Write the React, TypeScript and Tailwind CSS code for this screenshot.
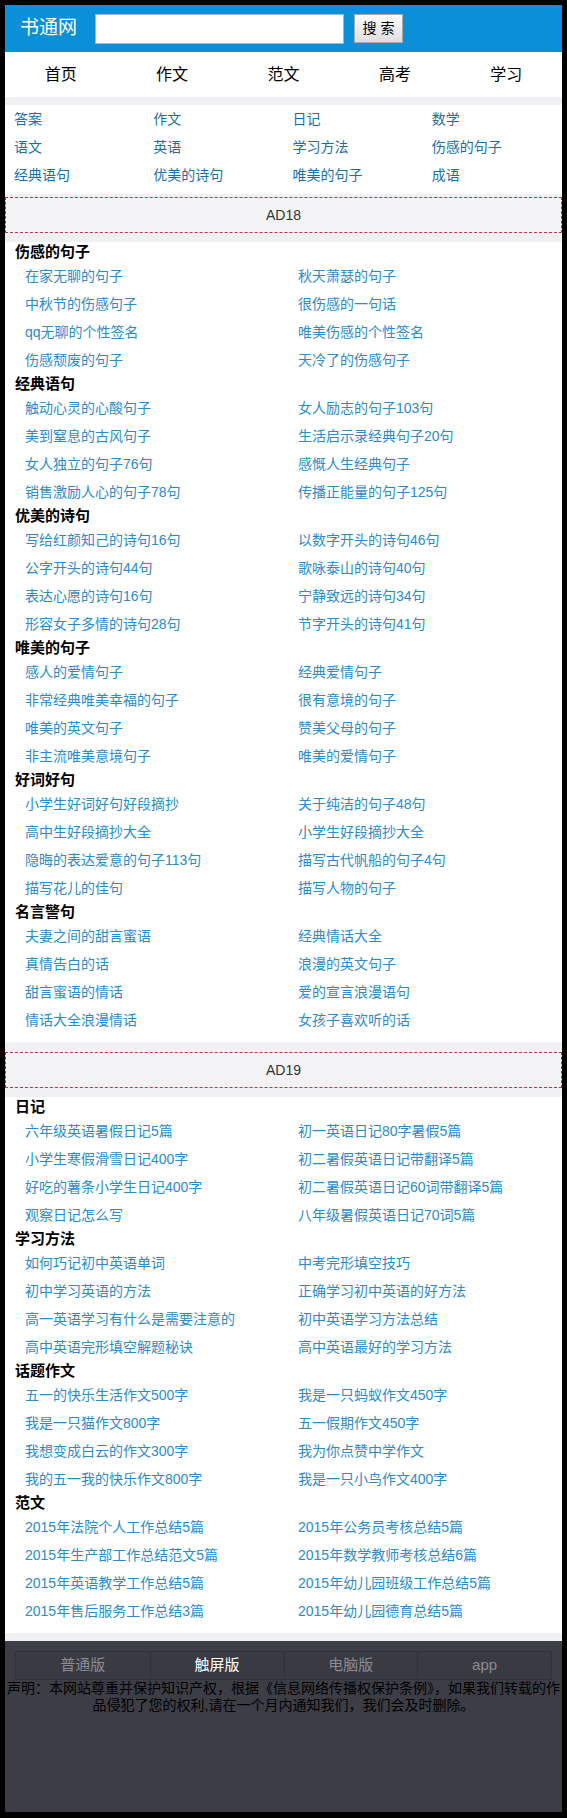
import React from "react";

const FONT = { fontFamily: '"Liberation Sans", "Noto Sans CJK SC", sans-serif' };

const NAV = ["首页", "作文", "范文", "高考", "学习"];

const CATS = [
  "答案", "作文", "日记", "数学",
  "语文", "英语", "学习方法", "伤感的句子",
  "经典语句", "优美的诗句", "唯美的句子", "成语",
];

type Section = { title: string; items: string[] };

const BLOCK_A: Section[] = [
  {
    title: "伤感的句子",
    items: ["在家无聊的句子", "秋天萧瑟的句子", "中秋节的伤感句子", "很伤感的一句话", "qq无聊的个性签名", "唯美伤感的个性签名", "伤感颓废的句子", "天冷了的伤感句子"],
  },
  {
    title: "经典语句",
    items: ["触动心灵的心酸句子", "女人励志的句子103句", "美到窒息的古风句子", "生活启示录经典句子20句", "女人独立的句子76句", "感慨人生经典句子", "销售激励人心的句子78句", "传播正能量的句子125句"],
  },
  {
    title: "优美的诗句",
    items: ["写给红颜知己的诗句16句", "以数字开头的诗句46句", "公字开头的诗句44句", "歌咏泰山的诗句40句", "表达心愿的诗句16句", "宁静致远的诗句34句", "形容女子多情的诗句28句", "节字开头的诗句41句"],
  },
  {
    title: "唯美的句子",
    items: ["感人的爱情句子", "经典爱情句子", "非常经典唯美幸福的句子", "很有意境的句子", "唯美的英文句子", "赞美父母的句子", "非主流唯美意境句子", "唯美的爱情句子"],
  },
  {
    title: "好词好句",
    items: ["小学生好词好句好段摘抄", "关于纯洁的句子48句", "高中生好段摘抄大全", "小学生好段摘抄大全", "隐晦的表达爱意的句子113句", "描写古代帆船的句子4句", "描写花儿的佳句", "描写人物的句子"],
  },
  {
    title: "名言警句",
    items: ["夫妻之间的甜言蜜语", "经典情话大全", "真情告白的话", "浪漫的英文句子", "甜言蜜语的情话", "爱的宣言浪漫语句", "情话大全浪漫情话", "女孩子喜欢听的话"],
  },
];

const BLOCK_B: Section[] = [
  {
    title: "日记",
    items: ["六年级英语暑假日记5篇", "初一英语日记80字暑假5篇", "小学生寒假滑雪日记400字", "初二暑假英语日记带翻译5篇", "好吃的薯条小学生日记400字", "初二暑假英语日记60词带翻译5篇", "观察日记怎么写", "八年级暑假英语日记70词5篇"],
  },
  {
    title: "学习方法",
    items: ["如何巧记初中英语单词", "中考完形填空技巧", "初中学习英语的方法", "正确学习初中英语的好方法", "高一英语学习有什么是需要注意的", "初中英语学习方法总结", "高中英语完形填空解题秘诀", "高中英语最好的学习方法"],
  },
  {
    title: "话题作文",
    items: ["五一的快乐生活作文500字", "我是一只蚂蚁作文450字", "我是一只猫作文800字", "五一假期作文450字", "我想变成白云的作文300字", "我为你点赞中学作文", "我的五一我的快乐作文800字", "我是一只小鸟作文400字"],
  },
  {
    title: "范文",
    items: ["2015年法院个人工作总结5篇", "2015年公务员考核总结5篇", "2015年生产部工作总结范文5篇", "2015年数学教师考核总结6篇", "2015年英语教学工作总结5篇", "2015年幼儿园班级工作总结5篇", "2015年售后服务工作总结3篇", "2015年幼儿园德育总结5篇"],
  },
];

const TABS = [
  { label: "普通版", active: false },
  { label: "触屏版", active: true },
  { label: "电脑版", active: false },
  { label: "app", active: false },
];

function Ad({ label }: { label: string }) {
  return (
    <div className="h-[36px] border border-dashed border-[#c23440] bg-[#f3f2f5] flex items-center justify-center text-[14px] text-[#333]">
      {label}
    </div>
  );
}

function SectionList({ sections }: { sections: Section[] }) {
  return (
    <div className="bg-white pb-[8px]">
      {sections.map((s) => (
        <div key={s.title}>
          <h3 className="h-5 leading-5 pl-[10px] text-[15px] font-bold text-black">{s.title}</h3>
          <ul className="grid grid-cols-[273px_1fr] pl-[20px]">
            {s.items.map((it) => (
              <li key={it} className="h-7 leading-7 text-[14px] text-[#2b8bcb] whitespace-nowrap">
                {it}
              </li>
            ))}
          </ul>
        </div>
      ))}
    </div>
  );
}

export default function App() {
  return (
    <div className="bg-black px-[5px] pt-[5px] pb-[6px]" style={FONT}>
      <div className="bg-[#f1f1f3]">
        {/* header */}
        <header className="h-[47px] bg-[#0b8fd9] flex items-center pl-[15px]">
          <span className="w-[75px] text-[19px] text-white">书通网</span>
          <input className="w-[249px] h-[30px] bg-white border border-[#9fb8c9] outline-none" />
          <button className="ml-[10px] w-[49px] h-[29px] border border-[#a9a9a9] bg-gradient-to-b from-[#fbfbfb] to-[#dedede] text-[14px] text-black">
            搜 索
          </button>
        </header>

        {/* nav */}
        <nav className="h-[45px] bg-white grid grid-cols-5">
          {NAV.map((n) => (
            <div key={n} className="flex items-center justify-center text-[16px] text-black">
              {n}
            </div>
          ))}
        </nav>

        {/* categories */}
        <div className="mt-[8px] bg-white grid grid-cols-4 pb-[5px]">
          {CATS.map((c) => (
            <div key={c} className="h-7 leading-7 pl-[9px] text-[14px] text-[#1c6ea9]">
              {c}
            </div>
          ))}
        </div>

        <div className="mt-[3px]">
          <Ad label="AD18" />
        </div>

        <div className="mt-[9px]">
          <SectionList sections={BLOCK_A} />
        </div>

        <div className="mt-[10px]">
          <Ad label="AD19" />
        </div>

        <div className="mt-[9px]">
          <SectionList sections={BLOCK_B} />
        </div>

        {/* footer */}
        <footer className="mt-[8px] bg-[#3d3d46] pt-[10px] pb-[98px]">
          <div className="mx-[10px] h-[29px] grid grid-cols-4 border border-[#31313a] bg-[#3a3a43]">
            {TABS.map((t, i) => (
              <div
                key={t.label}
                className={`flex items-center justify-center text-[15px] ${i > 0 ? "border-l border-[#31313a]" : ""} ${t.active ? "text-white" : "text-[#8b8b93]"}`}
              >
                {t.label}
              </div>
            ))}
          </div>
          <p className="text-center text-[14px] leading-[17px] text-black">
            声明：本网站尊重并保护知识产权，根据《信息网络传播权保护条例》，如果我们转载的作品侵犯了您的权利,请在一个月内通知我们，我们会及时删除。
          </p>
        </footer>
      </div>
    </div>
  );
}
